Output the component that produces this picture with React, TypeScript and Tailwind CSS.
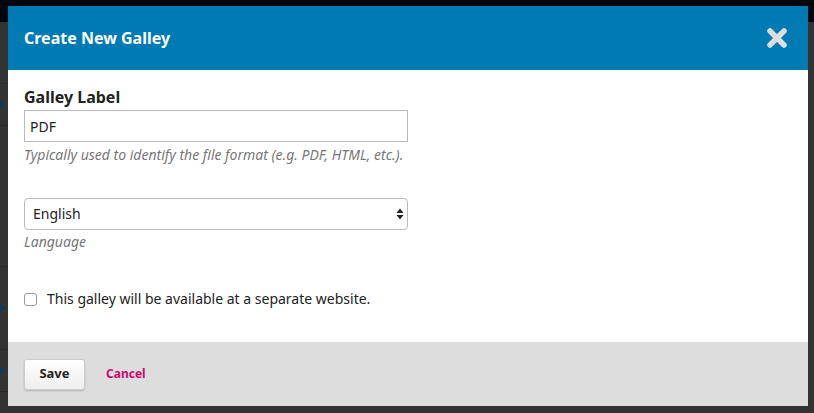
import { useState } from "react";

function CloseIcon() {
  return (
    <svg width="22" height="22" viewBox="0 0 22 22" aria-hidden="true">
      <path d="M4 4 L18 18 M18 4 L4 18" stroke="#dddddd" strokeWidth="5.5" strokeLinecap="round" />
    </svg>
  );
}

function SelectArrows() {
  return (
    <svg width="8" height="12" viewBox="0 0 8 12" aria-hidden="true">
      <path d="M4 0.5 L7.5 5 L0.5 5 Z" fill="#222" />
      <path d="M0.5 7 L7.5 7 L4 11.5 Z" fill="#222" />
    </svg>
  );
}

function RowArrow() {
  return (
    <svg width="6" height="8" viewBox="0 0 6 8" aria-hidden="true">
      <path d="M0 0 L6 4 L0 8 Z" fill="#0b3a5c" />
    </svg>
  );
}

export default function App() {
  const [label, setLabel] = useState("PDF");
  const [remote, setRemote] = useState(false);

  return (
    <div
      className="relative h-[413px] w-[814px] overflow-hidden bg-[#333333]"
      style={{ fontFamily: '"Noto Sans", "Open Sans", sans-serif' }}
    >
      <div className="h-[22px] bg-[#01070d]" />
      {/* page behind the overlay, seen on the left edge */}
      <div className="absolute left-0 top-[22px] flex h-[391px] w-[8px] flex-col">
        <div className="h-[62px] border-b border-[#2a2a2a]" />
        <div className="flex h-[42px] items-center border-b border-[#2a2a2a]">
          <RowArrow />
        </div>
        <div className="h-[140px]" />
        <div className="flex h-[84px] items-center border-y border-[#2a2a2a]">
          <RowArrow />
        </div>
        <div className="flex h-[42px] items-center border-b border-[#2a2a2a]">
          <RowArrow />
        </div>
      </div>

      <div className="absolute left-[8px] top-[6px] flex h-[400px] w-[800px] flex-col bg-white">
        <div className="flex h-[64px] items-center justify-between bg-[#007ab2] pl-4 pr-5">
          <h1 className="text-[16px] font-bold text-white">Create New Galley</h1>
          <button type="button" aria-label="Close" className="flex items-center">
            <CloseIcon />
          </button>
        </div>

        <div className="flex-1 px-4 pt-[16px]">
          <label className="block text-[16px] font-bold leading-[22px] text-[#222]">Galley Label</label>
          <input
            value={label}
            onChange={(e) => setLabel(e.target.value)}
            className="mt-[2px] block h-[32px] w-[384px] border border-[#bbbbbb] px-[5px] text-[14px] text-[#222] outline-none"
          />
          <p className="mt-[3px] text-[14px] italic leading-[20px] text-[#777]">
            Typically used to identify the file format (e.g. PDF, HTML, etc.).
          </p>

          <div className="mt-[33px] flex h-[32px] w-[384px] items-center justify-between rounded-[4px] border border-[#bbbbbb] pl-[8px] pr-[3px]">
            <span className="text-[14px] leading-[20px] text-[#222]">English</span>
            <SelectArrows />
          </div>
          <p className="mt-[1px] text-[14px] italic leading-[22px] text-[#777]">Language</p>

          <label className="mt-[36px] flex items-center gap-[10px] text-[14px] leading-[20px] text-[#222]">
            <input
              type="checkbox"
              checked={remote}
              onChange={(e) => setRemote(e.target.checked)}
              className="h-[13px] w-[13px] appearance-none rounded-[3px] border border-[#999] bg-white"
            />
            This galley will be available at a separate website.
          </label>
        </div>

        <div className="flex h-[64px] items-center gap-[21px] bg-[#dddddd] px-4">
          <button
            type="button"
            className="h-[31px] w-[61px] rounded-[3px] border border-[#cccccc] bg-gradient-to-b from-white to-[#eeeeee] text-[13px] font-bold text-[#222] shadow-[0_1px_2px_rgba(0,0,0,0.2)]"
          >
            Save
          </button>
          <button type="button" className="text-[12px] font-bold text-[#d00a6c]">
            Cancel
          </button>
        </div>
      </div>
    </div>
  );
}
